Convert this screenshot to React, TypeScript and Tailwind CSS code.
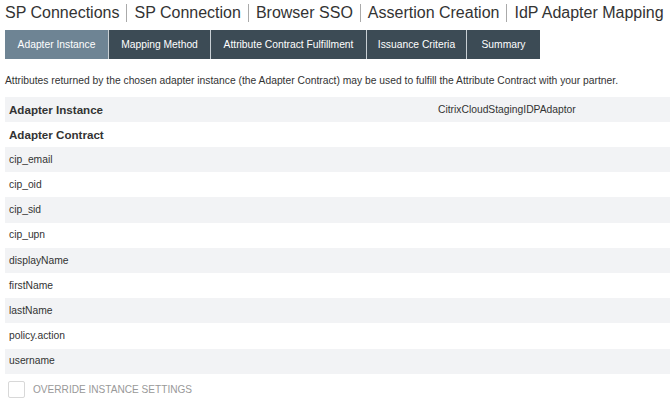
import React from "react"

const crumbs = ["SP Connections", "SP Connection", "Browser SSO", "Assertion Creation", "IdP Adapter Mapping"]

const tabs = [
  { label: "Adapter Instance", w: "w-[104px]", active: true },
  { label: "Mapping Method", w: "w-[102px]" },
  { label: "Attribute Contract Fulfillment", w: "w-[156px]" },
  { label: "Issuance Criteria", w: "w-[100px]" },
  { label: "Summary", w: "w-[73px]" },
]

const attributes = [
  "cip_email",
  "cip_oid",
  "cip_sid",
  "cip_upn",
  "displayName",
  "firstName",
  "lastName",
  "policy.action",
  "username",
]

export default function App() {
  return (
    <div className="w-[670px] h-[406px] overflow-hidden bg-white font-['Liberation_Sans',Arial,sans-serif] text-[#333]">
      {/* breadcrumb title */}
      <div className="flex items-center h-[25px] pl-[5px] text-[16px] leading-none text-[#333] whitespace-nowrap">
        {crumbs.map((c, i) => (
          <React.Fragment key={c}>
            {i > 0 && <span className="shrink-0 mx-[7px] h-[18px] w-px bg-[#aaa]" />}
            <span className="shrink-0">{c}</span>
          </React.Fragment>
        ))}
      </div>

      {/* tabs */}
      <div className="flex mt-[5px] ml-[5px] h-[29px]">
        {tabs.map((t) => (
          <div
            key={t.label}
            className={`${t.w} flex items-center justify-center text-[10.3px] text-white border-r border-[#c8cfd4] last:border-r-0 ${
              t.active ? "bg-[#6e8494]" : "bg-[#3c4b55]"
            }`}
          >
            {t.label}
          </div>
        ))}
      </div>

      <p className="mt-[15px] ml-[5px] text-[10.3px] leading-[13px] text-[#333] whitespace-nowrap">
        Attributes returned by the chosen adapter instance (the Adapter Contract) may be used to fulfill the Attribute Contract with your partner.
      </p>

      <div className="mt-[10px] ml-[5px]">
        <div className="flex items-center h-[25px] bg-[#f2f3f5] pl-[4px]">
          <span className="w-[429px] text-[11.6px] font-bold">Adapter Instance</span>
          <span className="text-[10.3px]">CitrixCloudStagingIDPAdaptor</span>
        </div>
        <div className="flex items-center h-[25px] pl-[4px] text-[11.6px] font-bold">Adapter Contract</div>
        {attributes.map((a, i) => (
          <div
            key={a}
            className={`flex items-center h-[25.2px] pl-[4px] text-[10.3px] ${i % 2 === 0 ? "bg-[#f2f3f5]" : "bg-white"}`}
          >
            {a}
          </div>
        ))}
        <div className="flex items-center mt-[7px] pl-[3px]">
          <span className="w-[17px] h-[17px] border border-[#d8d8d8] rounded-[2px] bg-white" />
          <span className="ml-[8px] text-[10.1px] text-[#999]">OVERRIDE INSTANCE SETTINGS</span>
        </div>
      </div>
    </div>
  )
}
